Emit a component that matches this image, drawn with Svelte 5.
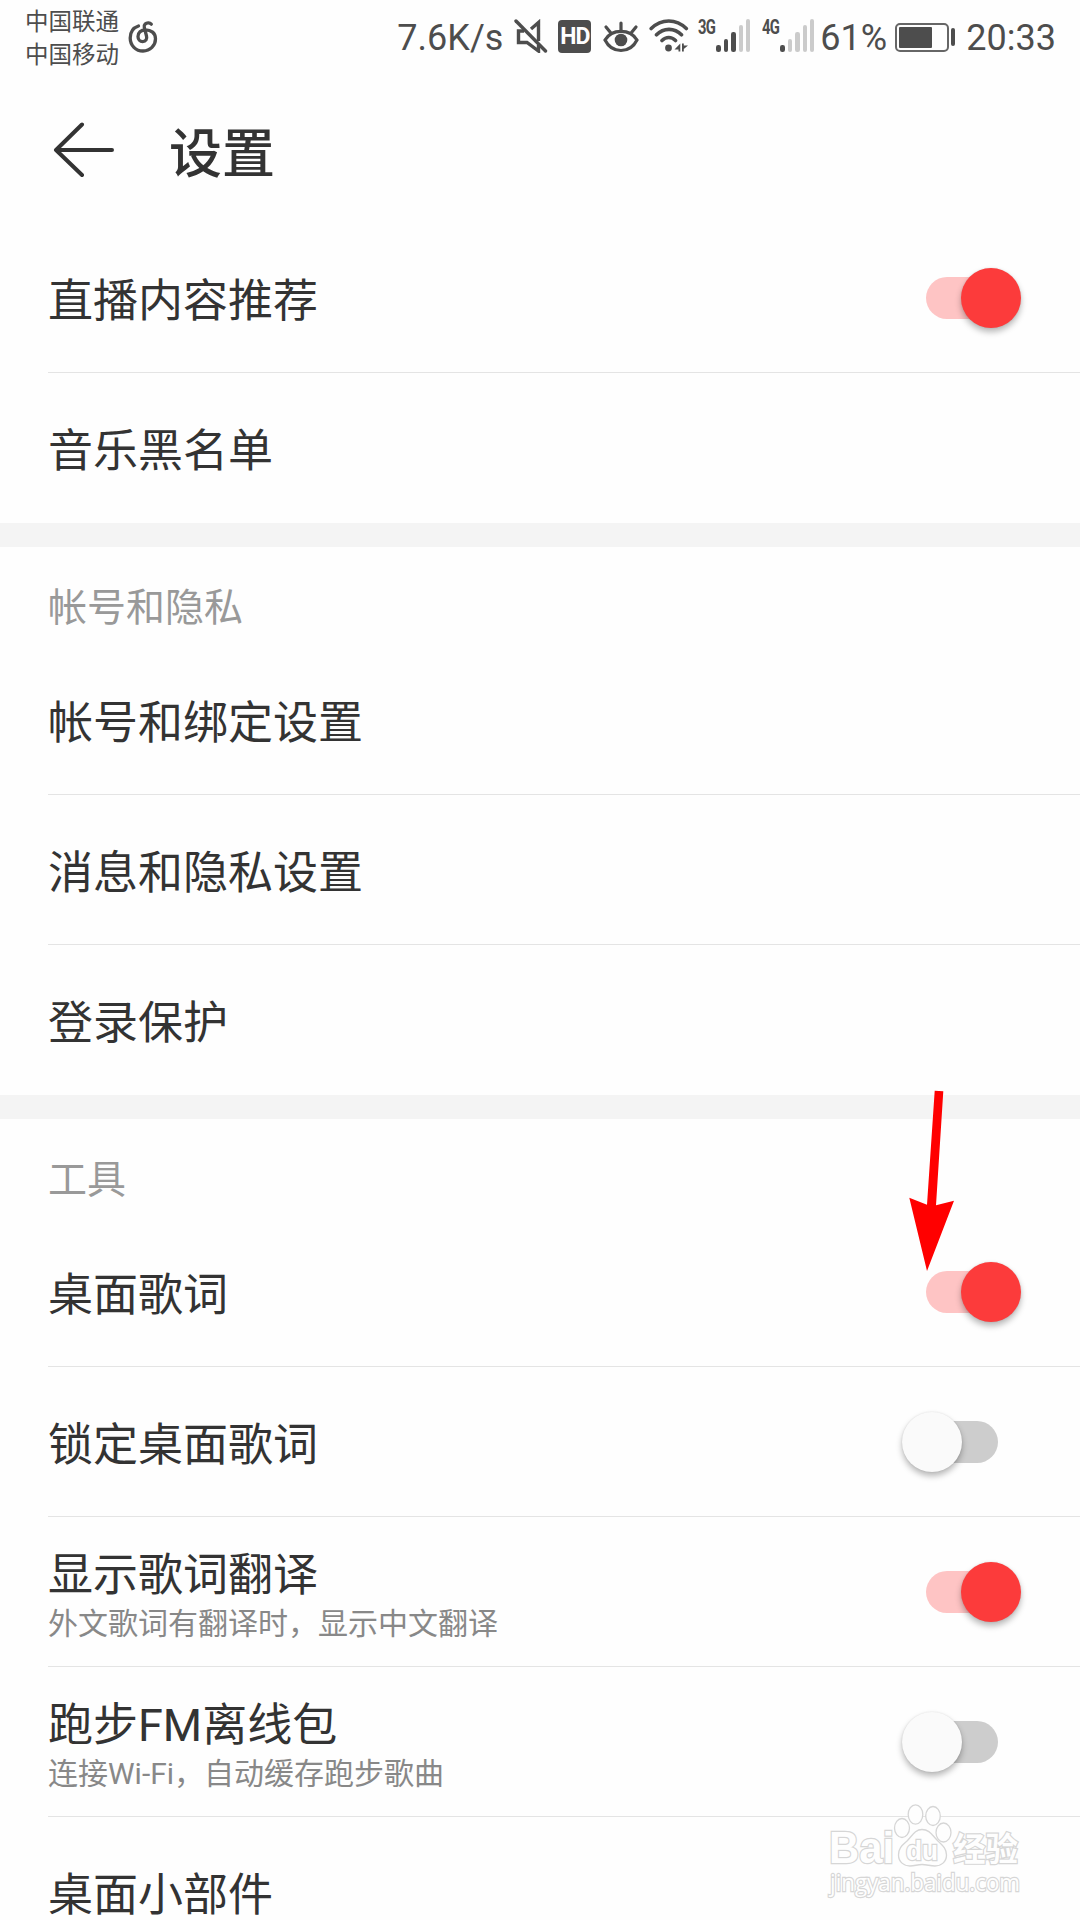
<script lang="ts">
  type Row = { label: string; desc?: string; on?: boolean };
  type Group = { title?: string; rows: Row[] };

  let groups = $state<Group[]>([
    {
      rows: [{ label: "直播内容推荐", on: true }, { label: "音乐黑名单" }],
    },
    {
      title: "帐号和隐私",
      rows: [{ label: "帐号和绑定设置" }, { label: "消息和隐私设置" }, { label: "登录保护" }],
    },
    {
      title: "工具",
      rows: [
        { label: "桌面歌词", on: true },
        { label: "锁定桌面歌词", on: false },
        { label: "显示歌词翻译", desc: "外文歌词有翻译时，显示中文翻译", on: true },
        { label: "跑步FM离线包", desc: "连接Wi-Fi，自动缓存跑步歌曲", on: false },
        { label: "桌面小部件" },
      ],
    },
  ]);

  const signals = [
    { name: "3G", level: 3 },
    { name: "4G", level: 1 },
  ];
  const barHeights = [7, 13, 20, 27, 33];

  function toggle(row: Row) {
    row.on = !row.on;
  }
</script>

<div class="screen">
  <div class="status">
    <div class="carriers">
      <span>中国联通</span>
      <span>中国移动</span>
    </div>
    <svg class="netease" viewBox="0 0 30 32" width="30" height="32" fill="none" stroke="#4d4d4d" stroke-width="3.3" stroke-linecap="round">
      <path d="M10.500 5C5 6.800 2.200 11.500 2.200 17C2.200 24.500 7.800 30 15 30S27.500 24.500 27.500 17.800C27.500 12 23 8.800 17.500 8.800C12.800 8.800 10 11.800 10 15.500C10 18.500 12 20.700 14.700 20.700C17.800 20.700 19.300 18 18.500 15L16.300 6.500C15.600 3.500 18 1.700 20.500 1.900C21.800 2 22.700 2.600 23.300 3.200" />
    </svg>

    <div class="status-right">
      <span class="speed">7.6K/s</span>
      <svg class="mute" viewBox="0 0 34 34" width="34" height="34" fill="none" stroke="#4d4d4d" stroke-width="3.400">
        <path d="M24.500 22V3.500L17 10M10 12H4.500V23.500H13L24.500 32V26" />
        <path d="M2 2L31.500 32" stroke-linecap="round" />
      </svg>
      <span class="hd">HD</span>
      <svg class="eye" viewBox="0 0 36 32" width="36" height="32" fill="none" stroke="#4d4d4d" stroke-width="3.200" stroke-linecap="round">
        <path d="M2 19C9 7.500 27 7.500 34 19C27 33 9 33 2 19Z" />
        <path d="M18 9V2M7.500 11.500L3 6M28.500 11.500L33 6" />
        <circle cx="18" cy="19" r="6.300" fill="#4d4d4d" stroke="none" />
      </svg>
      <svg class="wifi" viewBox="0 0 40 34" width="40" height="34" fill="none" stroke="#4d4d4d" stroke-width="3.600" stroke-linecap="round">
        <path d="M2.200 9.500C12.500-.5 27-.5 37.300 9.500M7.500 15.800C14.500 8.500 25.500 8.500 32.500 15.800M13 21.500C17 17.500 22.500 17.500 26.500 21.500" />
        <circle cx="19.500" cy="29" r="3.400" fill="#4d4d4d" stroke="none" />
        <path d="M31.300 24.500V32.500H29.500V30.500H25.500ZM33 24.500V32.500H34.800V30L39 26.500H34.800V24.500Z" fill="#4d4d4d" stroke="none" />
      </svg>
      {#each signals as signal}
        <div class="signal">
          <span class="net">{signal.name}</span>
          <div class="bars">
            {#each barHeights as height, i}
              <i class:lit={i < signal.level} style="height: {height}px"></i>
            {/each}
          </div>
        </div>
      {/each}
      <span class="percent">61%</span>
      <div class="battery"><div class="charge"></div></div>
      <div class="nub"></div>
      <span class="clock">20:33</span>
    </div>
  </div>

  <header>
    <svg viewBox="0 0 62 56" width="62" height="56" fill="none" stroke="#333" stroke-width="4" stroke-linecap="round" stroke-linejoin="round">
      <path d="M59 28H3M29 2.500L3 28L29 53" />
    </svg>
    <h1>设置</h1>
  </header>

  {#each groups as group}
    <section>
      {#if group.title}
        <h2>{group.title}</h2>
      {/if}
      {#each group.rows as row}
        <div class="row">
          <div class="text">
            <span class="label">{row.label}</span>
            {#if row.desc}
              <span class="desc">{row.desc}</span>
            {/if}
          </div>
          {#if row.on !== undefined}
            <button class="switch" class:on={row.on} aria-label={row.label} onclick={() => toggle(row)}>
              <span class="thumb"></span>
            </button>
          {/if}
        </div>
      {/each}
    </section>
  {/each}

  <!-- Pointer to the desktop lyrics switch -->
  <svg class="pointer" viewBox="0 0 46 182" width="46" height="182" fill="#f00">
    <path d="M25.700 .7L34.300 1.300L27 115.300L45 110.700L18 181L.3 107.700L18 114.700Z" />
  </svg>

  <svg class="watermark" viewBox="0 0 220 110" width="220" height="110" fill="#fefefe" stroke="#d6d6d6" stroke-width="1.300">
    <text class="brand" x="7" y="63" textLength="65" lengthAdjust="spacingAndGlyphs">Bai</text>
    <ellipse cx="80" cy="28" rx="7.500" ry="9.500" />
    <ellipse cx="93.500" cy="14.500" rx="7.300" ry="9.700" />
    <ellipse cx="111" cy="16" rx="7.300" ry="9.500" />
    <ellipse cx="121.500" cy="32.500" rx="7.500" ry="9.500" />
    <path d="M100 29.500C93 29.500 90 36 85 41C80 45.500 76.500 48 76.500 55C76.500 62 82 66 88 66C93 66 95 64.500 100 64.500S108 66 113 66C119 66 124.500 62 124.500 55C124.500 48 120 45 115 40C110 35 107.500 29.500 100 29.500Z" />
    <text class="du" x="84" y="60" textLength="32" lengthAdjust="spacingAndGlyphs">du</text>
    <text class="cn" x="131" y="61" textLength="65" lengthAdjust="spacingAndGlyphs">经验</text>
    <text class="url" x="8" y="91" textLength="190" lengthAdjust="spacingAndGlyphs">jingyan.baidu.com</text>
  </svg>
</div>

<style>
  :global(body) {
    margin: 0;
    background: #fefefe;
    overflow: hidden;
  }

  .screen {
    position: relative;
    width: 1080px;
    height: 1920px;
    overflow: hidden;
    background: #fefefe;
    color: #333;
    font-family: Roboto, "Noto Sans CJK SC", sans-serif;
  }

  .status {
    display: flex;
    align-items: flex-start;
    box-sizing: border-box;
    height: 76px;
    padding-left: 25px;
    color: #4d4d4d;
  }

  .carriers {
    display: flex;
    flex-direction: column;
    width: 96px;
    padding-top: 6px;
    font-size: 23.5px;
    line-height: 33px;
    white-space: nowrap;
  }

  .netease {
    margin: 21px 0 0 7px;
  }

  .status-right {
    display: flex;
    align-items: flex-start;
    margin-left: auto;
    padding-right: 24px;
  }

  .speed,
  .percent,
  .clock {
    font-size: 36px;
    line-height: 42px;
    padding-top: 17px;
    white-space: nowrap;
  }

  .speed {
    width: 117px;
  }

  .mute {
    margin: 19px 0 0;
  }

  .hd {
    width: 33px;
    height: 33px;
    margin: 20px 0 0 10px;
    border-radius: 4px;
    background: #4d4d4d;
    color: #fefefe;
    font: bold 23px/33px Roboto, sans-serif;
    letter-spacing: -1px;
    text-align: center;
  }

  .eye {
    margin: 21px 0 0 12px;
  }

  .wifi {
    margin: 19px 0 0 10px;
  }

  .signal {
    display: flex;
    align-items: flex-start;
    width: 64px;
  }

  .wifi + .signal {
    margin-left: 9px;
  }

  .net {
    width: 18px;
    margin-top: 17px;
    font: bold 20px/20px Roboto, sans-serif;
    letter-spacing: -1px;
    transform: scaleX(0.74);
    transform-origin: left;
  }

  .bars {
    display: flex;
    align-items: flex-end;
    gap: 3px;
    height: 33px;
    margin-top: 19px;
  }

  .bars i {
    width: 4.4px;
    border-radius: 2.2px;
    background: #cbcbcb;
  }

  .bars i.lit {
    background: #4d4d4d;
  }

  .percent {
    width: 75px;
    margin-left: -6px;
  }

  .battery {
    box-sizing: border-box;
    width: 54px;
    height: 29px;
    margin-top: 23px;
    padding: 2px;
    border: 2px solid #666;
    border-radius: 5px;
  }

  .charge {
    width: 33px;
    height: 21px;
    border-radius: 1px;
    background: #4d4d4d;
  }

  .nub {
    width: 4px;
    height: 18px;
    margin: 28px 11px 0 2px;
    border-radius: 2px;
    background: #4d4d4d;
  }

  header {
    display: flex;
    align-items: center;
    height: 147px;
    padding-left: 53px;
  }

  h1 {
    margin: 10px 0 0 54px;
    font-size: 53px;
    font-weight: 500;
    line-height: 70px;
  }

  section + section {
    border-top: 24px solid #f4f4f4;
  }

  h2 {
    height: 98px;
    margin: 0;
    padding-left: 48px;
    color: #999;
    font-size: 39px;
    font-weight: 400;
    line-height: 122px;
  }

  .row {
    display: flex;
    align-items: center;
    justify-content: space-between;
    box-sizing: border-box;
    height: 150px;
    margin-left: 48px;
    padding-right: 82px;
    border-bottom: 1px solid #e4e4e4;
  }

  .row:last-child {
    border-bottom-color: transparent;
  }

  .text {
    display: flex;
    flex-direction: column;
    padding-top: 8px;
  }

  .label {
    font-size: 45px;
    line-height: 54px;
  }

  .desc {
    margin: -2px 0 -4px;
    color: #888;
    font-size: 30px;
    line-height: 46px;
  }

  .switch {
    display: flex;
    align-items: center;
    width: 72px;
    height: 42px;
    padding: 0;
    border: none;
    border-radius: 21px;
    background: #cdcdcd;
  }

  .switch.on {
    background: #fec4c4;
  }

  .thumb {
    flex: none;
    width: 60px;
    height: 60px;
    margin-left: -24px;
    border-radius: 50%;
    background: #fafafa;
    box-shadow: 0 4px 6px rgba(0, 0, 0, 0.28), 0 0 2px rgba(0, 0, 0, 0.1);
  }

  .switch.on .thumb {
    margin-left: 35.4px;
    background: #fc3b3b;
  }

  .pointer {
    position: absolute;
    left: 909px;
    top: 1090px;
  }

  .watermark {
    position: absolute;
    left: 822px;
    top: 1800px;
    overflow: visible;
  }

  .watermark text {
    paint-order: stroke;
    stroke-width: 2.4px;
  }

  .brand {
    font: bold 44px "Liberation Sans", sans-serif;
  }

  .du {
    font: bold 27px "Liberation Sans", sans-serif;
  }

  .cn {
    font: bold 33px "Noto Sans CJK SC", sans-serif;
  }

  .url {
    font: 24px "Open Sans", sans-serif;
  }
</style>
